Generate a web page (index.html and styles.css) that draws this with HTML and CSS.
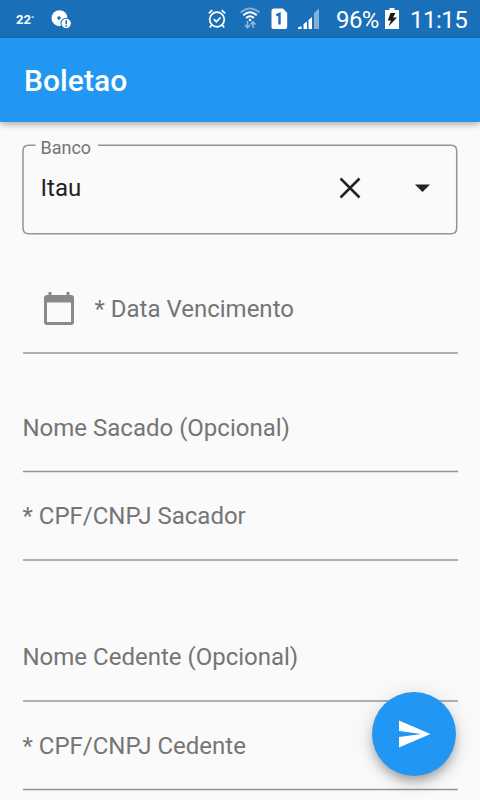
FILE: index.html
```html
<!DOCTYPE html>
<html lang="pt-BR">
<head>
<meta charset="utf-8">
<title>Boletao</title>
<link rel="stylesheet" href="styles.css">
</head>
<body>
<div class="screen">
  <div class="statusbar">
    <span class="temp">22<i>°</i></span>
    <svg class="disc" width="21" height="20" viewBox="0 0 21 20">
      <circle cx="8.500" cy="8.200" r="8" fill="#fff"/>
      <circle cx="8" cy="8" r="1.800" fill="#1a70b8"/>
      <circle cx="15.200" cy="13.500" r="5.800" fill="#1a70b8"/>
      <circle cx="15.200" cy="13.500" r="4.700" fill="#fff"/>
      <path d="M15.200 10.300v4M15.200 15.300v1.500" stroke="#1a70b8" stroke-width="1.600"/>
    </svg>
    <span class="grow"></span>
    <svg class="alarm" width="18" height="20" viewBox="0 0 18 20" fill="none" stroke="#fff" stroke-width="1.700">
      <circle cx="9" cy="10.500" r="7.300"/>
      <path d="M.8 4.300 4.300 1.200M17.200 4.300 13.700 1.200M3.800 16l-2 2.600M14.200 16l2 2.600M5.700 10.200l2.600 2.500 4.300-4.200"/>
    </svg>
    <svg class="wifi" width="20" height="22" viewBox="0 0 20 22" fill="none" stroke="#fff" stroke-width="1.900">
      <path d="M.7 5.500Q10-2.700 19.300 5.500" opacity=".45"/>
      <path d="M3.300 8.300Q10 2.300 16.700 8.300M6 11Q10 7.300 14 11"/>
      <circle cx="10" cy="13" r="1.300" fill="#fff" stroke="none"/>
      <path d="M7.500 14v6M5 18l2.500 2.700L10 18M13 21v-6M10.700 17.500l2.300-2.700 2.500 2.700" opacity=".5" stroke-width="1.600"/>
    </svg>
    <svg class="sim" width="17" height="22" viewBox="0 0 17 22">
      <path d="M3 .5h9L16.200 5v14q0 2-2 2H2.500q-2 0-2-2V3q0-2.500 2.500-2.500z" fill="#fff"/>
      <path d="M5.300 7.300 8.500 5.800V16.500" fill="none" stroke="#1a70b8" stroke-width="2.400"/>
    </svg>
    <svg class="signal" width="21" height="21" viewBox="0 0 21 21" fill="#fff">
      <path d="M0 21v-1.500L3.500 18v3zM5.500 21v-5l3.500-2.500V21zM10.500 21v-9L14 9v12z"/>
      <path d="M16 21V5l5-4.500V21z" opacity=".45"/>
    </svg>
    <span class="battery-text">96%</span>
    <svg class="battery" width="14" height="21" viewBox="0 0 14 21">
      <path d="M4.500 0h5v2H14v19H0V2h4.500z" fill="#fff"/>
      <path d="M5.500 5h5L8 9.500h4L3.500 18.500 6 12.500H2.800z" fill="#181818"/>
    </svg>
    <span class="clock">11:15</span>
  </div>
  <header class="appbar"><h1>Boletao</h1></header>
  <main class="form">
    <div class="select">
      <svg class="outline" width="436" height="91" viewBox="0 0 436 91">
        <path d="M76 1.200H429q5.700 0 5.700 5.700V84q0 5.700-5.700 5.700H6.700Q1 89.700 1 84V6.900Q1 1.200 6.700 1.200H13.500" fill="none" stroke="#949494" stroke-width="1.500"/>
      </svg>
      <span class="caption">Banco</span>
      <div class="choice">
        <span class="value">Itau</span>
        <svg class="clear" width="22" height="22" viewBox="0 0 22 22"><path d="M1.500 1.500l19 19M20.500 1.500l-19 19" stroke="#222" stroke-width="2.500"/></svg>
        <svg class="arrow" width="15" height="8" viewBox="0 0 15 8"><path d="M0 .5h15L7.500 8z" fill="#222"/></svg>
      </div>
    </div>
    <div class="field date">
      <svg class="calendar" width="30" height="33" viewBox="0 0 30 33">
        <path d="M4.500 0h3v3h15V0h3v3H27q3 0 3 3v24q0 3-3 3H3q-3 0-3-3V6q0-3 3-3h1.500zM3 10.500V30h24V10.500z" fill="#898989" fill-rule="evenodd"/>
      </svg>
      <label>* Data Vencimento</label>
    </div>
    <div class="line"></div>
    <div class="field sacado-name"><label>Nome Sacado (Opcional)</label></div>
    <div class="line thin"></div>
    <div class="field sacado-doc"><label>* CPF/CNPJ Sacador</label></div>
    <div class="line"></div>
    <div class="field cedente-name"><label>Nome Cedente (Opcional)</label></div>
    <div class="line"></div>
    <div class="field cedente-doc"><label>* CPF/CNPJ Cedente</label></div>
    <div class="line thin"></div>
  </main>
  <div class="fab">
    <svg width="32" height="28" viewBox="0 0 32 28"><path d="M0 0.500 31.500 14 0 27.500V17L22.500 14 0 11z" fill="#fff"/></svg>
  </div>
</div>
</body>
</html>
```

FILE: styles.css
```css
* { box-sizing: border-box; }
body { margin: 0; font-family: Roboto, "Liberation Sans", sans-serif; }
svg { display: block; flex: none; }
.screen { position: relative; width: 480px; height: 800px; overflow: hidden; background: #fafafa; }
.statusbar { display: flex; align-items: flex-start; height: 38px; padding-right: 12px; background: #1a70b8; color: #fff; white-space: nowrap; }
.temp { width: 35px; margin: 11px 0 0 16px; font-size: 13px; line-height: 16px; font-weight: 700; }
.temp i { font-size: 8px; font-style: normal; vertical-align: 3px; }
.disc { margin-top: 10px; }
.grow { flex: 1; }
.alarm { margin: 9px 14px 0 0; }
.wifi { margin: 7px 11.500px 0 0; }
.sim { margin: 8px 10px 0 0; }
.signal { margin: 8px 17px 0 0; }
.battery-text { width: 49px; font-size: 24px; line-height: 28px; margin-top: 6px; letter-spacing: -.6px; }
.battery { margin: 8px 11px 0 0; }
.clock { width: 58px; font-size: 24px; line-height: 28px; margin-top: 6px; letter-spacing: -.5px; }
.appbar { position: relative; display: flex; align-items: center; height: 84px; padding: 2px 24px 0; background: #2196f3; box-shadow: 0 3px 6px rgba(0,0,0,.22), 0 1px 8px rgba(0,0,0,.1); }
h1 { margin: 0; color: #fff; font-size: 30px; line-height: 36px; font-weight: 500; letter-spacing: .05px; }
.form { padding: 22px 22px 0; }
.select { position: relative; height: 91px; padding: 29px 28.500px 0 18.500px; }
.outline { position: absolute; left: 0; top: 0; }
.caption { position: absolute; left: 18.500px; top: -7px; font-size: 18px; line-height: 22px; color: #757575; }
.choice { display: flex; align-items: center; height: 30px; }
.value { flex: 1; font-size: 24px; line-height: 28px; color: #222; }
.clear { margin-right: 54px; }
.field { display: flex; align-items: flex-start; padding-left: .5px; font-size: 24px; line-height: 28px; color: #757575; white-space: nowrap; }
.date { height: 117px; padding: 57px 0 0 21.500px; }
.date label { margin: 3px 0 0 21px; }
.sacado-name { height: 116px; padding-top: 60px; }
.sacado-doc { height: 86px; padding-top: 29px; }
.cedente-name { height: 139px; padding-top: 82px; }
.cedente-doc { height: 86px; padding-top: 30px; }
.line { height: 2px; margin-left: .5px; background: #b0b0b0; }
.line.thin { height: 3px; background: linear-gradient(#e0e0e0 0 1px, #949494 1px 2px, #e0e0e0 2px 3px); }
.fab { position: absolute; left: 372px; top: 692px; display: flex; align-items: center; width: 84px; height: 84px; padding-left: 27px; border-radius: 50%; background: #2196f3; box-shadow: 0 6px 8px -2px rgba(0,0,0,.2), 0 8px 14px rgba(0,0,0,.14), 0 2px 24px rgba(0,0,0,.1); }
```
